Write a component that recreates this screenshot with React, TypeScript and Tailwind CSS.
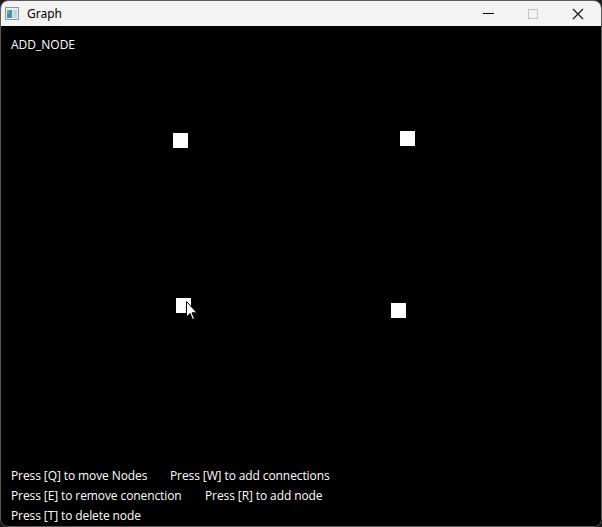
import React from "react";

const nodes = [
  { x: 173, y: 107 },
  { x: 400, y: 105 },
  { x: 176, y: 272 },
  { x: 391, y: 277 },
];

export default function App() {
  return (
    <div className="w-[602px] h-[527px] bg-[#1c1c1c]">
      <div className="w-[602px] h-[527px] rounded-[8px] border border-[#5a5a5a] overflow-hidden flex flex-col bg-black">
        <div className="h-[25px] shrink-0 bg-[#f3f3f3] flex items-center relative">
          <svg className="ml-[4px]" width="14" height="13" viewBox="0 0 14 13">
            <rect x="0.5" y="0.5" width="13" height="12" fill="#e8eef2" stroke="#8a96a0" />
            <rect x="2" y="3" width="5" height="8" fill="#3d8fb8" />
            <rect x="2" y="3" width="3" height="4" fill="#5fb07a" />
            <rect x="8" y="3" width="4" height="8" fill="#c8d2da" />
          </svg>
          <span className="ml-[8px] text-[12px] text-black leading-none" style={{ fontFamily: "'Noto Sans', sans-serif" }}>Graph</span>
          <div className="ml-auto flex items-center h-full">
            <div className="w-[46px] h-full flex items-center justify-center">
              <div className="w-[11px] h-[1px] bg-black" />
            </div>
            <div className="w-[44px] h-full flex items-center justify-center">
              <div className="w-[10px] h-[10px] border border-[#c4c4c4]" />
            </div>
            <div className="w-[46px] h-full flex items-center justify-center">
              <svg width="12" height="12" viewBox="0 0 12 12">
                <path d="M1 1 L11 11 M11 1 L1 11" stroke="#111" strokeWidth="1.1" />
              </svg>
            </div>
          </div>
        </div>
        <div className="relative flex-1 bg-black text-white text-[12px] leading-[20px]" style={{ fontFamily: "'Open Sans', sans-serif" }}>
          <div className="pl-[10px] pt-[9px]">ADD_NODE</div>
          {nodes.map((n, i) => (
            <div key={i} className="absolute w-[15px] h-[15px] bg-white" style={{ left: n.x - 1, top: n.y }} />
          ))}
          <svg className="absolute" style={{ left: 185, top: 275 }} width="12" height="20" viewBox="0 0 12 20">
            <path d="M0.5 0.5 L0.5 16 L4 12.5 L6.5 18.5 L8.5 17.6 L6 11.8 L11 11.8 Z" fill="white" stroke="black" strokeWidth="1" />
          </svg>
          <div className="absolute left-[10px] bottom-[0px] flex flex-col tracking-[-0.1px]">
            <div className="flex">
              <span className="w-[159px]">Press [Q] to move Nodes</span>
              <span>Press [W] to add connections</span>
            </div>
            <div className="flex">
              <span className="w-[194px]">Press [E] to remove conenction</span>
              <span>Press [R] to add node</span>
            </div>
            <div className="flex">
              <span>Press [T] to delete node</span>
            </div>
          </div>
        </div>
      </div>
    </div>
  );
}
